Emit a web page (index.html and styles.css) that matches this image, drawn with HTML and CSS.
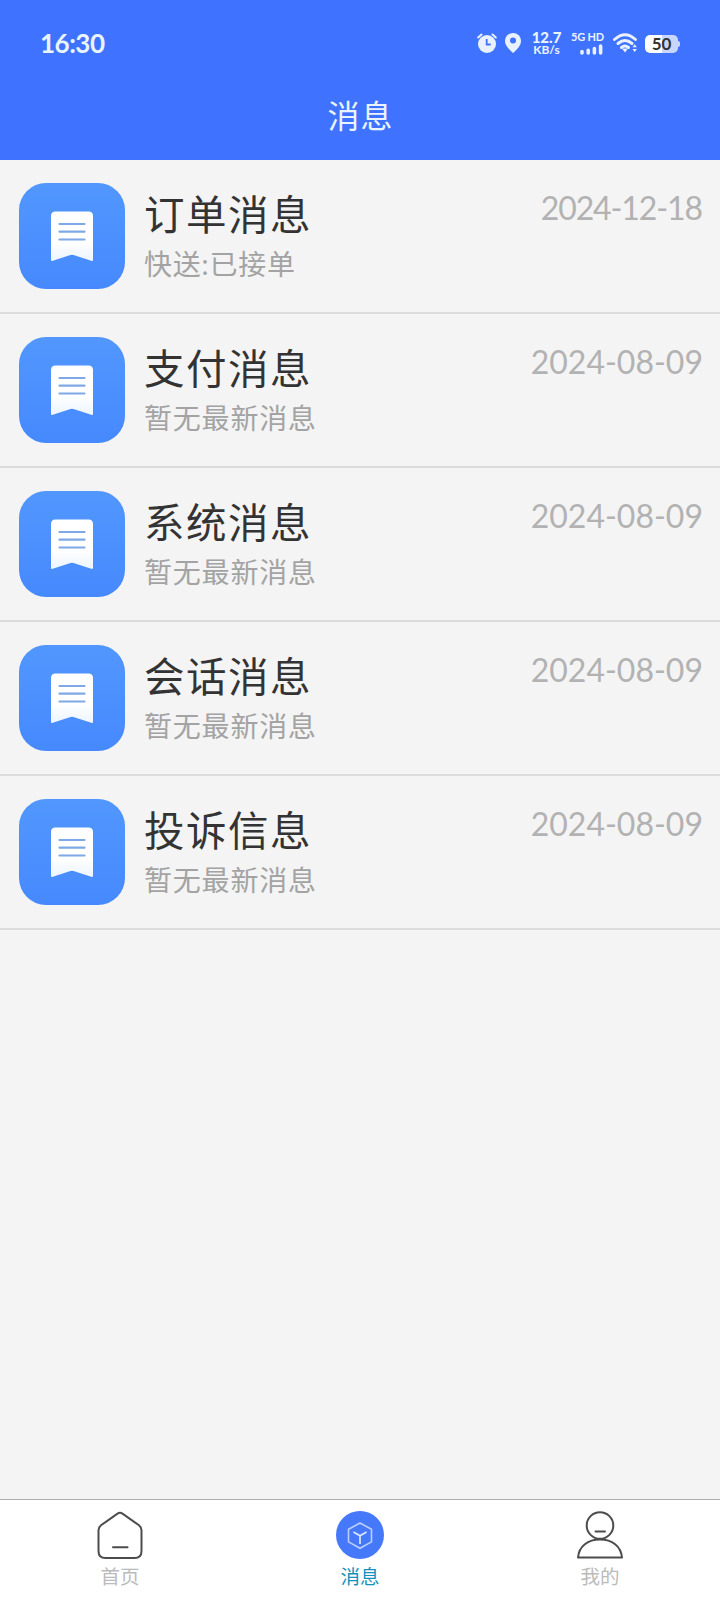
FILE: index.html
```
<!DOCTYPE html>
<html lang="zh-CN">
<head>
    <meta charset="UTF-8">
    <meta name="viewport" content="width=device-width, initial-scale=1.0">
    <title>消息</title>
    <link rel="stylesheet" href="styles.css">
</head>
<body>
    <!-- Shared message icon -->
    <svg class="defs" width="0" height="0">
        <linearGradient id="tile-bg" x1="0" y1="0" x2="0" y2="1">
            <stop offset="0" stop-color="#5197fe"/>
            <stop offset="1" stop-color="#4689fe"/>
        </linearGradient>
        <linearGradient id="note-bg" x1="0" y1="0" x2="0" y2="1">
            <stop offset="0.6" stop-color="#fff"/>
            <stop offset="1" stop-color="#edf5ff"/>
        </linearGradient>
        <symbol id="note" viewBox="0 0 106 106">
            <rect width="106" height="106" rx="27" fill="url(#tile-bg)"/>
            <path d="M33 78q-1 0-1-1V33q0-4.500 4.500-4.500h33q4.500 0 4.500 4.500v44q0 1-1 1L54.500 72q-1.500-.6-3 0z" fill="url(#note-bg)"/>
            <path d="M40.500 41h25M40.500 48.700h25M40.500 56.500h25" stroke="#7fa8e6" stroke-width="2.200" stroke-linecap="round"/>
        </symbol>
    </svg>

    <header>
        <div class="status">
            <span class="time">16:30</span>
            <div class="status-icons">
                <svg class="alarm" width="20" height="20" viewBox="0 0 20 20">
                    <circle cx="10" cy="11" r="9" fill="#e9f1ff"/>
                    <path d="M1.200 4.500L4.500 1.500M18.800 4.500L15.500 1.500" stroke="#e9f1ff" stroke-width="2" stroke-linecap="round"/>
                    <path d="M9.700 6v5.500h4" fill="none" stroke="#3f72ff" stroke-width="1.800"/>
                </svg>
                <svg class="pin" width="16" height="20" viewBox="0 0 16 20">
                    <path d="M8 0a8 8 0 0 1 8 8c0 4.500-4 8.500-8 12C4 16.500 0 12.500 0 8a8 8 0 0 1 8-8z" fill="#e9f1ff"/>
                    <circle cx="8" cy="7.500" r="3" fill="#3f72ff"/>
                </svg>
                <div class="speed"><b>12.7</b><span>KB/s</span></div>
                <div class="signal">
                    <span>5G HD</span>
                    <svg width="24" height="12" viewBox="0 0 24 12">
                        <path d="M2 8.500v1.500M8.200 7.300v2.700M14.400 5.500v4.500M20.600 3v7" stroke="#e9f1ff" stroke-width="3.600" stroke-linecap="round"/>
                    </svg>
                </div>
                <svg class="wifi" width="25" height="20" viewBox="0 0 25 20">
                    <g fill="none" stroke="#e9f1ff" stroke-width="3" stroke-linecap="round">
                        <path d="M1.500 6.500Q12 -3 22.500 6.500"/>
                        <path d="M5 10.500Q12 4.500 19 10.500"/>
                        <path d="M8.500 14.500Q12 11.600 15.500 14.500"/>
                    </g>
                    <path d="M9 15.500h6L12 19.500z" fill="#e9f1ff"/>
                    <path d="M19.500 14.200l2.200-3 2.200 3zM19.500 16l2.200 3 2.200-3z" fill="#e9f1ff"/>
                </svg>
                <div class="battery"><span>50</span></div>
            </div>
        </div>
        <h1>消息</h1>
    </header>

    <main>
        <section class="message">
            <svg class="icon"><use href="#note"/></svg>
            <div class="info">
                <h2>订单消息</h2>
                <p>快送:已接单</p>
            </div>
            <time class="narrow">2024-12-18</time>
        </section>
        <section class="message">
            <svg class="icon"><use href="#note"/></svg>
            <div class="info">
                <h2>支付消息</h2>
                <p>暂无最新消息</p>
            </div>
            <time>2024-08-09</time>
        </section>
        <section class="message">
            <svg class="icon"><use href="#note"/></svg>
            <div class="info">
                <h2>系统消息</h2>
                <p>暂无最新消息</p>
            </div>
            <time>2024-08-09</time>
        </section>
        <section class="message">
            <svg class="icon"><use href="#note"/></svg>
            <div class="info">
                <h2>会话消息</h2>
                <p>暂无最新消息</p>
            </div>
            <time>2024-08-09</time>
        </section>
        <section class="message">
            <svg class="icon"><use href="#note"/></svg>
            <div class="info">
                <h2>投诉信息</h2>
                <p>暂无最新消息</p>
            </div>
            <time>2024-08-09</time>
        </section>
    </main>

    <nav>
        <a href="#">
            <svg width="48" height="48" viewBox="0 0 48 48" fill="none" stroke="#4c4c4c" stroke-width="2" stroke-linecap="round">
                <path d="M21.500 2.600q2.500-1.500 5 0L43 14.300q2.500 2 2.500 5V40q0 7-7 7H9.500q-7 0-7-7V19.300q0-3 2.500-5z"/>
                <path d="M17 36.300h14.500"/>
            </svg>
            <span>首页</span>
        </a>
        <a href="#" class="active">
            <svg width="48" height="48" viewBox="0 0 48 48" fill="none">
                <circle cx="24" cy="24" r="24" fill="#4678fa"/>
                <path d="M24 12l11.500 6.300v12.600L24 37.300l-11.500-6.400V18.300z" stroke="#bccffd" stroke-width="1.600"/>
                <path d="M17.500 21l6.500 3.800 6.500-3.800M24 24.800V33" stroke="#dce6ff" stroke-width="1.700"/>
            </svg>
            <span>消息</span>
        </a>
        <a href="#">
            <svg width="48" height="48" viewBox="0 0 48 48" fill="none" stroke="#4c4c4c" stroke-width="2" stroke-linecap="round" stroke-linejoin="round">
                <circle cx="24" cy="14.500" r="13.300"/>
                <path d="M19.500 20.500h9.500"/>
                <path d="M2 46.500C3 35 12 28.500 24 28.500S45 35 46 46.500z"/>
            </svg>
            <span>我的</span>
        </a>
    </nav>
</body>
</html>
```

FILE: styles.css
```
/* Basic styling */
body {
    font-family: 'Lato', 'Noto Sans CJK SC', sans-serif;
    background-color: #f4f4f4;
    color: #333;
    margin: 0;
    height: 1600px;
    display: flex;
    flex-direction: column;
    overflow: hidden;
}

.defs {
    position: absolute;
}

header {
    background-color: #3f72ff;
    color: #e9f4ff;
    height: 160px;
}

header h1 {
    margin: 0;
    padding: 8px 0 0 1px;
    font-size: 32px;
    line-height: 44px;
    font-weight: 400;
    letter-spacing: 1px;
    text-align: center;
}

/* Status bar */
.status {
    height: 86px;
    padding: 0 39px 0 40px;
    box-sizing: border-box;
    display: flex;
    align-items: center;
    justify-content: space-between;
}

.time {
    font-size: 26px;
    font-weight: 700;
    letter-spacing: -0.500px;
}

.status-icons {
    display: flex;
    align-items: center;
}

.pin {
    margin-left: 8px;
}

.speed {
    width: 29px;
    margin-left: 11px;
    display: flex;
    flex-direction: column;
    align-items: center;
    font-size: 12px;
    line-height: 12px;
    font-weight: 700;
}

.speed b {
    font-size: 15px;
    line-height: 13px;
}

.signal {
    width: 33px;
    margin-left: 10px;
    display: flex;
    flex-direction: column;
    align-items: flex-end;
    font-size: 11px;
    line-height: 12px;
    font-weight: 700;
    letter-spacing: -0.200px;
    white-space: nowrap;
}

.wifi {
    margin-left: 9px;
}

.battery {
    position: relative;
    width: 33px;
    height: 18px;
    margin: 2px 3px 0 7px;
    border-radius: 5px;
    background: linear-gradient(90deg, #fff 50%, #c9d6fc 50%);
    color: #333;
    font-size: 17px;
    line-height: 18px;
    font-weight: 700;
    text-align: center;
}

.battery::after {
    content: '';
    position: absolute;
    right: -2px;
    top: 6px;
    width: 2px;
    height: 6px;
    border-radius: 0 2px 2px 0;
    background: #c9d6fc;
}

/* Message list */
main {
    flex: 1;
}

.message {
    height: 154px;
    padding: 23px 17px 0 19px;
    box-sizing: border-box;
    border-bottom: 2px solid #dcdcdc;
    display: flex;
    align-items: flex-start;
}

.icon {
    width: 106px;
    height: 106px;
}

.info {
    flex: 1;
    margin-left: 19px;
}

.info h2 {
    margin: 4px 0 0;
    font-size: 40.500px;
    line-height: 56px;
    font-weight: 400;
    letter-spacing: 1.500px;
}

.info p {
    margin: 1px 0 0;
    font-size: 28px;
    line-height: 40px;
    letter-spacing: 0.800px;
    color: #a3a3a3;
}

.message time {
    margin-top: 6px;
    font-size: 32px;
    line-height: 38px;
    color: #b2b2b2;
}

.message .narrow {
    margin-right: 1px;
    letter-spacing: -1.100px;
}

/* Bottom tabs */
nav {
    height: 101px;
    box-sizing: border-box;
    border-top: 1px solid #b0b0b0;
    background-color: #fff;
    display: flex;
}

nav a {
    flex: 1;
    padding-top: 11px;
    display: flex;
    flex-direction: column;
    align-items: center;
    color: #bbb;
    font-size: 19.500px;
    line-height: 28px;
    text-decoration: none;
}

nav span {
    margin-top: 4px;
}

nav .active {
    color: #1492bd;
}
```
